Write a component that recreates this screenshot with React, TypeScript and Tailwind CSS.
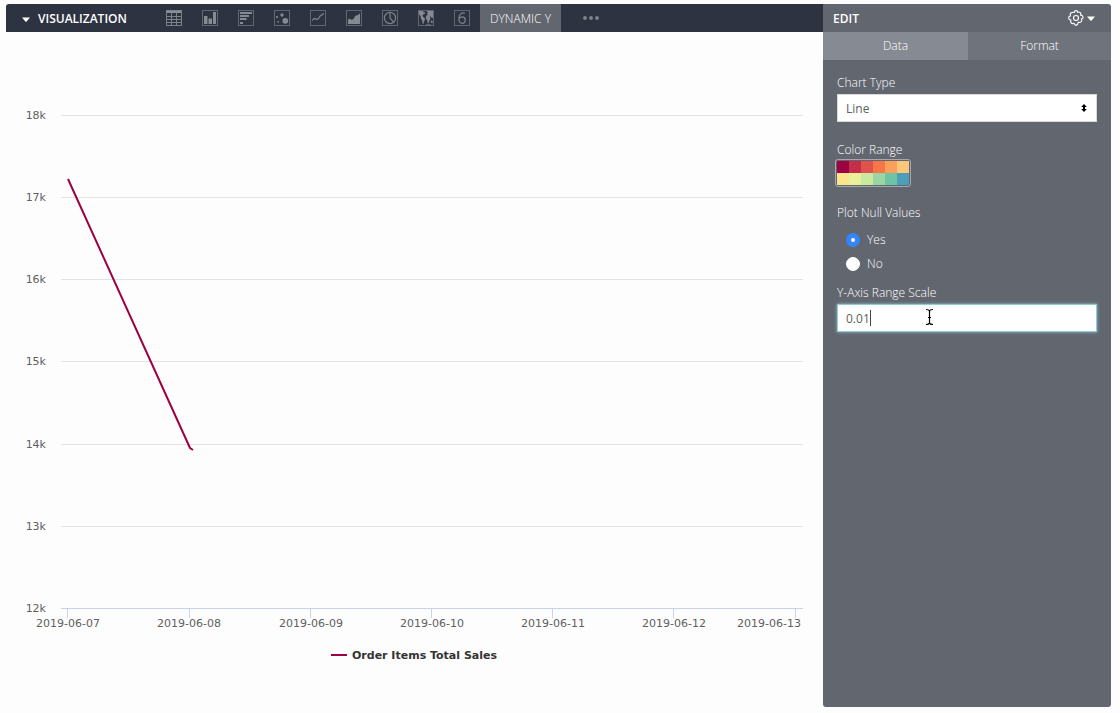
import { useState, type ReactNode } from "react";

function Caret() {
  return (
    <svg width="8" height="5" viewBox="0 0 8 5" aria-hidden="true">
      <path d="M0 0.5h8L4.6 4.4q-.6.6-1.2 0z" fill="#fff" />
    </svg>
  );
}

const chartIcons: { label: string; art: ReactNode }[] = [
  {
    label: "Table",
    art: (
      <>
        <path d="M0 0h16v3H0z" fill="#8a8e96" />
        <path d="M.5 .5h15v15H.5zM0 6.5h16M0 9.5h16M0 12.5h16M5.5 3v13M10.5 3v13" fill="none" stroke="#7c8089" />
      </>
    ),
  },
  {
    label: "Column",
    art: <path d="M2 6h3.5v8H2zM6.5 8.5H10V14H6.500zM11 2h3v12h-3z" fill="#868a92" />,
  },
  {
    label: "Bar",
    art: <path d="M2 2h12v2H2zM2 5h9v2H2zM2 8h6.500v2H2zM2 12h3v2H2z" fill="#868a92" />,
  },
  {
    label: "Scatter",
    art: (
      <g fill="#868a92">
        <circle cx="11.300" cy="10.800" r="2.900" />
        <circle cx="8" cy="5" r="1.700" />
        <circle cx="3" cy="7" r="1.100" />
        <circle cx="4.200" cy="11.800" r="0.900" />
      </g>
    ),
  },
  {
    label: "Line",
    art: (
      <path d="M2 10.300c1.200 0 1.400-1.800 2.600-1.800s1.500 1.100 2.700.9c2-.4 2-3.400 3.700-4.100 1.200-.5 1.800-.8 2.700-2" fill="none" stroke="#7e828b" strokeWidth="1.300" />
    ),
  },
  {
    label: "Area",
    art: <path d="M2 14V9.500c1.200-1 2-.8 3 0 1.500.6 2.500-.2 3.300-1.800.8-1.700 1.500-2.200 2.700-2.400 1.200-.2 2-1 3-2.300v11z" fill="#868a92" />,
  },
  {
    label: "Pie",
    art: (
      <g fill="none" stroke="#7e828b" strokeWidth="1.200">
        <circle cx="8" cy="8" r="5.600" />
        <path d="M8 2.400V8l3.800 4.200" />
      </g>
    ),
  },
  {
    label: "Map",
    art: (
      <path
        d="M1 1h4l.8 1.500L7 2l-.3 2-1.700.6L4.500 6l1.300 1.500L7.200 9 6 11.500 5.500 14l-1-.5-.2-3-1.300-2L2.600 6 1 4.500zM8.500 1H15v6.500l-1 .8-1-1.800-1.300.5.8 1.500-1.300 2.500-.5 2.500-1-.5-.5-3L8.300 9 7.700 7.200 8.500 5.500 9.800 5 9 3.800l.8-1.300zM12.800 10.500l1.700.5.3 2-1.800-.3zM8 14.500h5v.7H8z"
        fill="#868a92"
      />
    ),
  },
  {
    label: "Single Value",
    art: (
      <path d="M10.800 3.100C7.200 2.300 4.900 4.600 4.900 9c0 2.700 1.200 4.300 3.200 4.300 1.900 0 3.100-1.400 3.100-3.300S10 6.900 8.200 6.900C6.700 6.900 5.400 7.800 5 9.300" fill="none" stroke="#7e828b" strokeWidth="1.200" />
    ),
  },
];

function VisualizationBar() {
  return (
    <header className="flex h-7 items-center rounded-tl-[3px] bg-[#2d3340]">
      <button type="button" className="ml-4 flex h-7 w-36 items-center gap-2 pt-0.5 text-xs font-semibold text-white">
        <Caret />
        VISUALIZATION
      </button>
      <nav aria-label="Chart types" className="flex items-center gap-5">
        {chartIcons.map(({ label, art }) => (
          <button key={label} type="button" aria-label={label} className="size-4">
            <svg width="16" height="16" viewBox="0 0 16 16" aria-hidden="true">
              <rect x=".5" y=".5" width="15" height="15" fill="none" stroke="#60656f" />
              {art}
            </svg>
          </button>
        ))}
      </nav>
      <button type="button" className="ml-2.5 h-7 w-[81px] bg-[#62666f] pt-0.5 text-xs font-[350] text-white">
        DYNAMIC Y
      </button>
      <button type="button" aria-label="More chart types" className="ml-[22px]">
        <svg width="16" height="4" viewBox="0 0 16 4" fill="#81848a" aria-hidden="true">
          <circle cx="2" cy="2" r="1.900" />
          <circle cx="8" cy="2" r="1.900" />
          <circle cx="14" cy="2" r="1.900" />
        </svg>
      </button>
    </header>
  );
}

const yTicks = [
  { label: "18k", y: 83 },
  { label: "17k", y: 165 },
  { label: "16k", y: 247 },
  { label: "15k", y: 329 },
  { label: "14k", y: 412 },
  { label: "13k", y: 494 },
  { label: "12k", y: 576 },
];

const xTicks = [
  { label: "2019-06-07", x: 61, textX: 62 },
  { label: "2019-06-08", x: 183, textX: 183 },
  { label: "2019-06-09", x: 304, textX: 305 },
  { label: "2019-06-10", x: 425, textX: 426 },
  { label: "2019-06-11", x: 546, textX: 547 },
  { label: "2019-06-12", x: 667, textX: 668 },
  { label: "2019-06-13", x: 789, textX: 763 },
];

function SalesChart() {
  return (
    <svg
      viewBox="0 0 817 675"
      role="img"
      aria-label="Order Items Total Sales by date"
      className="block w-full font-['DejaVu_Sans',sans-serif]"
    >
      {yTicks.map(({ label, y }) => (
        <g key={label}>
          <path d={`M55 ${y + 0.5}H797`} stroke={label === "12k" ? "#c6d4ec" : "#e2e3e4"} />
          <text x="40" y={y + 4} textAnchor="end" className="fill-[#606060] text-[11px]">
            {label}
          </text>
        </g>
      ))}
      {xTicks.map(({ label, x, textX }) => (
        <g key={label}>
          <path d={`M${x + 0.5} 577v9`} stroke="#c6d4ec" />
          <text x={textX} y="595" textAnchor="middle" className="fill-[#606060] text-[11px]">
            {label}
          </text>
        </g>
      ))}
      <path d="M62 147L184 416L187 418" fill="none" stroke="#9e0142" strokeWidth="2" strokeLinejoin="round" />
      <path d="M325 623H341" stroke="#9e0142" strokeWidth="2" />
      <text x="346" y="627" className="fill-[#333333] text-[11px] font-bold">
        Order Items Total Sales
      </text>
    </svg>
  );
}

const palette = [
  "bg-[#9e0142]",
  "bg-[#c42e4b]",
  "bg-[#e1524a]",
  "bg-[#f67648]",
  "bg-[#fba05b]",
  "bg-[#fdc678]",
  "bg-[#fce38e]",
  "bg-[#e9f097]",
  "bg-[#c8e99e]",
  "bg-[#9ad6a3]",
  "bg-[#6cc3a5]",
  "bg-[#4b9fb8]",
];

function EditPanel() {
  const [plotNulls, setPlotNulls] = useState("Yes");
  const [scale, setScale] = useState("0.01");
  return (
    <aside className="w-72 shrink-0 overflow-hidden rounded-r-[3px] rounded-bl-[3px] bg-[#62666f] text-xs font-[350] text-white">
      <div className="flex h-7 items-center justify-between pr-4 pl-2.5">
        <h2 className="pt-0.5 font-semibold">EDIT</h2>
        <button type="button" aria-label="Settings" className="flex items-center gap-[3px]">
          <svg width="16" height="16" viewBox="0 0 16 16" fill="none" stroke="#fff" strokeWidth="1.100" strokeLinejoin="round" aria-hidden="true">
            <path d="M6.300 2.400Q6.500.6 8 .6t1.700 1.800q1.500-1 2.600.3t.2 2.400q1.900.1 2.300 1.300.9 1.800-1.400 2.500.9 1.900-.4 3t-2.700.2Q10 14.800 8 15.400q-1.700-.4-2.100-2.200-1.700.9-2.700-.3T3 10.300Q.7 9.700.6 8t1.900-2Q1.700 4.200 2.900 3t3.400-.6z" />
            <circle cx="8" cy="8" r="2.500" />
          </svg>
          <Caret />
        </button>
      </div>
      <div role="tablist" className="grid h-7 grid-cols-[145fr_143fr]">
        <button type="button" role="tab" aria-selected="true" className="bg-[#868a92]">
          Data
        </button>
        <button type="button" role="tab" aria-selected="false" className="bg-[#6f737c]">
          Format
        </button>
      </div>
      <form className="flex flex-col px-3.5 pt-[15px]">
        <label htmlFor="chart-type" className="h-[19px] leading-4">
          Chart Type
        </label>
        <div className="relative">
          <select
            id="chart-type"
            className="block h-7 w-full appearance-none border border-[#d8dadd] bg-white px-2 pt-0.5 font-normal text-[#606060] outline-none"
          >
            <option>Line</option>
          </select>
          <svg className="pointer-events-none absolute top-2.5 right-2.5" width="6" height="8" viewBox="0 0 6 8" aria-hidden="true">
            <path d="M3 0l2.800 3H4v2h1.800L3 8 .2 5H2V3H.2z" fill="#000" />
          </svg>
        </div>

        <span id="color-range" className="mt-5 leading-4">
          Color Range
        </span>
        <button
          type="button"
          aria-labelledby="color-range"
          className="-ml-0.5 mt-px grid w-19 grid-cols-6 rounded-[3px] border border-[#a5a8ad] p-px"
        >
          {palette.map((color) => (
            <span key={color} className={`h-3 ${color}`} />
          ))}
        </button>

        <fieldset className="mt-[18px]">
          <legend className="leading-4">Plot Null Values</legend>
          <div className="flex flex-col gap-2 pt-[11px] pl-[9px]">
            {["Yes", "No"].map((option) => (
              <label key={option} className="flex items-center gap-[7px] leading-4">
                <input
                  type="radio"
                  name="plot-nulls"
                  checked={plotNulls === option}
                  onChange={() => setPlotNulls(option)}
                  className="size-3.5 appearance-none rounded-full border border-white bg-white checked:border-5 checked:border-[#3485fb]"
                />
                {option}
              </label>
            ))}
          </div>
        </fieldset>

        <label htmlFor="axis-scale" className="mt-[13px] h-[19px] leading-4">
          Y-Axis Range Scale
        </label>
        <div className="relative">
          <input
            id="axis-scale"
            type="text"
            value={scale}
            onChange={(event) => setScale(event.target.value)}
            className="block h-7 w-full border border-[#8fcbd3] bg-white px-2 font-normal text-[#606060] shadow-[0_0_3px_#8fcbd3] outline-none"
          />
          <span className="pointer-events-none absolute top-1.5 left-[33px] h-4 w-px bg-[#444444]" />
          <svg className="pointer-events-none absolute top-1 left-[88px]" width="9" height="18" viewBox="0 0 9 18" aria-hidden="true">
            <path d="M1 1.500q3 0 3.500 1.500Q5 1.500 8 1.500M4.500 3v12M1 16.500q3 0 3.500-1.500.5 1.500 3.500 1.500M3 9.500h3" fill="none" stroke="#000" strokeWidth="1.200" />
          </svg>
        </div>
      </form>
    </aside>
  );
}

export default function App() {
  return (
    <div className="flex min-h-screen bg-[#fdfdfd] pt-1 pr-[9px] pb-1.5 pl-1.5 font-['Open_Sans',sans-serif]">
      <main className="min-w-0 flex-1">
        <VisualizationBar />
        <SalesChart />
      </main>
      <EditPanel />
    </div>
  );
}
